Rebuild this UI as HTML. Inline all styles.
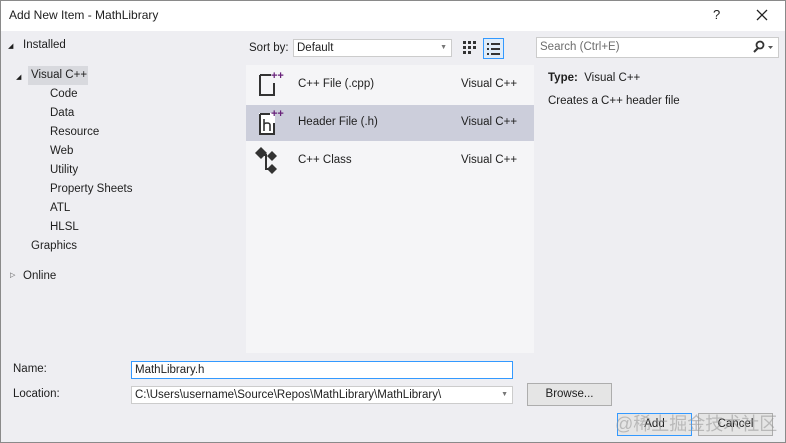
<!DOCTYPE html><html><head><style>
*{margin:0;padding:0;box-sizing:border-box}
body{width:786px;height:443px;overflow:hidden;background:#eeeef2;font-family:"Liberation Sans",sans-serif;font-size:11.5px;color:#1e1e1e;position:relative}
.a{position:absolute;white-space:nowrap}
</style></head><body>
<div class="a" style="left:0;top:0;width:786px;height:443px;border:1px solid #8a8a8a;z-index:5;pointer-events:none"></div>
<div class="a" style="left:0;top:0;width:786px;height:31px;background:#fff"></div>
<div class="a" style="left:9px;top:8px;font-size:12px">Add New Item - MathLibrary</div>
<div class="a" style="left:713px;top:7px;font-size:13px">?</div>
<svg class="a" style="left:756px;top:9px" width="12" height="12"><path d="M1 1L11 11M11 1L1 11" stroke="#222" stroke-width="1.3"/></svg>
<div class="a" style="left:246px;top:65px;width:288px;height:288px;background:#f5f5f7"></div>
<div class="a" style="left:8px;top:42px;font-size:7px">◢</div>
<div class="a" style="left:23px;top:39px">Installed</div>
<div class="a" style="left:16px;top:73px;font-size:7px">◢</div>
<div class="a" style="left:28px;top:66px;width:60px;height:19px;background:#d8d9de"></div>
<div class="a" style="left:31px;top:69px">Visual C++</div>
<div class="a" style="left:50px;top:88px">Code</div>
<div class="a" style="left:50px;top:107px">Data</div>
<div class="a" style="left:50px;top:126px">Resource</div>
<div class="a" style="left:50px;top:145px">Web</div>
<div class="a" style="left:50px;top:164px">Utility</div>
<div class="a" style="left:50px;top:183px">Property Sheets</div>
<div class="a" style="left:50px;top:202px">ATL</div>
<div class="a" style="left:50px;top:221px">HLSL</div>
<div class="a" style="left:31px;top:240px">Graphics</div>
<div class="a" style="left:10px;top:271px;font-size:7px;color:#555">▷</div>
<div class="a" style="left:23px;top:270px">Online</div>
<div class="a" style="left:249px;top:42px">Sort by:</div>
<div class="a" style="left:293px;top:39px;width:159px;height:18px;background:#fff;border:1px solid #ccc;padding-left:3px;line-height:16px">Default<span style="position:absolute;right:4px;top:0;font-size:7px;color:#777">▼</span></div>
<svg class="a" style="left:462px;top:40px" width="16" height="16"><g fill="#333"><rect x="1" y="1" width="3" height="3"/><rect x="6" y="1" width="3" height="3"/><rect x="11" y="1" width="3" height="3"/><rect x="1" y="6" width="3" height="3"/><rect x="6" y="6" width="3" height="3"/><rect x="11" y="6" width="3" height="3"/><rect x="1" y="11" width="3" height="3"/><rect x="6" y="11" width="3" height="3"/></g></svg>
<div class="a" style="left:483px;top:38px;width:21px;height:21px;border:1px solid #3399ff;background:#e0ecf8"></div>
<svg class="a" style="left:486px;top:41px" width="16" height="16"><g fill="#333"><rect x="1" y="2" width="2" height="2"/><rect x="5" y="2" width="9" height="2"/><rect x="1" y="7" width="2" height="2"/><rect x="5" y="7" width="9" height="2"/><rect x="1" y="12" width="2" height="2"/><rect x="5" y="12" width="9" height="2"/></g></svg>
<div class="a" style="left:536px;top:37px;width:243px;height:21px;background:#fff;border:1px solid #ccc;padding-left:3px;line-height:19px;color:#6d6d6d">Search (Ctrl+E)</div>
<svg class="a" style="left:752px;top:40px" width="24" height="14"><circle cx="8" cy="5" r="3.5" stroke="#333" stroke-width="1.8" fill="none"/><path d="M6 8L2 12" stroke="#333" stroke-width="2"/><path d="M16 6H21L18.5 9Z" fill="#555"/></svg>
<div class="a" style="left:246px;top:105px;width:288px;height:36px;background:#cccedb"></div>
<svg class="a" style="left:255px;top:68px" width="32" height="32"><path d="M5 7H16M5 7V27H19V15" stroke="#333" stroke-width="2" fill="none"/><text x="16" y="11" font-size="11" font-weight="bold" fill="#68217a" font-family="Liberation Sans">++</text></svg>
<svg class="a" style="left:255px;top:106px" width="32" height="32"><rect x="4" y="7" width="16" height="22" fill="#fff"/><path d="M5 8H15M5 8V28H19V17" stroke="#333" stroke-width="2" fill="none"/><path d="M9 13V25M9 19Q9 17 12 17Q15 17 15 19V25" stroke="#333" stroke-width="1.6" fill="none"/><text x="16" y="11" font-size="11" font-weight="bold" fill="#68217a" font-family="Liberation Sans">++</text></svg>
<svg class="a" style="left:252px;top:145px" width="32" height="32"><g fill="#333"><path d="M3 8L9 2L15 8L9 14Z"/><path d="M15 11L20 6L25 11L20 16Z"/><path d="M15 24L20 19L25 24L20 29Z"/></g><path d="M11 10H14V24H16" stroke="#333" stroke-width="2" fill="none"/></svg>
<div class="a" style="left:298px;top:78px">C++ File (.cpp)</div>
<div class="a" style="left:461px;top:78px">Visual C++</div>
<div class="a" style="left:298px;top:116px">Header File (.h)</div>
<div class="a" style="left:461px;top:116px">Visual C++</div>
<div class="a" style="left:298px;top:154px">C++ Class</div>
<div class="a" style="left:461px;top:154px">Visual C++</div>
<div class="a" style="left:548px;top:72px"><b>Type:</b>&nbsp; Visual C++</div>
<div class="a" style="left:548px;top:95px">Creates a C++ header file</div>
<div class="a" style="left:13px;top:363px">Name:</div>
<div class="a" style="left:131px;top:361px;width:382px;height:18px;background:#fff;border:1px solid #3399ff;padding-left:3px;line-height:16px">MathLibrary.h</div>
<div class="a" style="left:13px;top:388px">Location:</div>
<div class="a" style="left:131px;top:386px;width:382px;height:18px;background:#fff;border:1px solid #ccc;padding-left:3px;line-height:16px">C:\Users\username\Source\Repos\MathLibrary\MathLibrary\<span style="position:absolute;right:4px;top:0;font-size:7px;color:#777">▼</span></div>
<div class="a" style="left:527px;top:383px;width:85px;height:23px;background:#e5e5e5;border:1px solid #adadad;text-align:center;line-height:21px">Browse...</div>
<div class="a" style="left:617px;top:413px;width:75px;height:23px;background:#e5e5e5;border:1px solid #3399ff;text-align:center;line-height:21px">Add</div>
<div class="a" style="left:698px;top:413px;width:75px;height:23px;background:#e5e5e5;border:1px solid #adadad;text-align:center;line-height:21px">Cancel</div>
<div class="a" style="left:615px;top:410px;font-family:'Liberation Sans','Noto Sans CJK SC',sans-serif;font-size:18px;color:rgba(150,150,150,.55)">@稀土掘金技术社区</div>
</body></html>
